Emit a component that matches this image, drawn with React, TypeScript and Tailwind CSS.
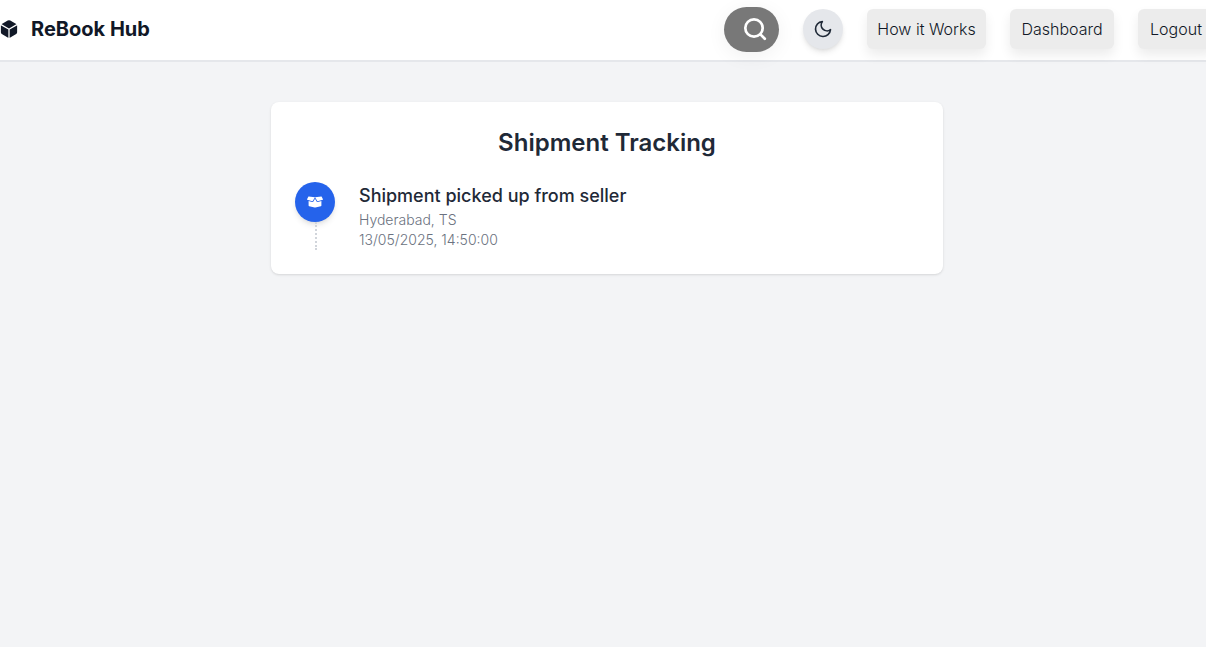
import { FaBoxOpen } from "react-icons/fa";
import { IoCube } from "react-icons/io5";
import { FiMoon } from "react-icons/fi";

const links = [
  { label: "How it Works", width: "w-[119px]" },
  { label: "Dashboard", width: "w-[104px]" },
  { label: "Logout", width: "w-[76px]" },
];

const events = [
  { title: "Shipment picked up from seller", place: "Hyderabad, TS", time: "13/05/2025, 14:50:00" },
];

function Header() {
  return (
    <header className="flex h-[62px] items-center justify-between border-b-2 border-[#e5e7eb] bg-white pb-[2px]">
      <a href="#home" className="-ml-px flex items-center gap-3 whitespace-nowrap text-[#111827]">
        <IoCube className="size-5" aria-hidden="true" />
        <span className="text-xl leading-7 font-bold">ReBook Hub</span>
      </a>
      <nav className="flex shrink-0 items-center gap-6">
        <button
          type="button"
          aria-label="Search"
          className="flex h-[45px] w-[55px] items-center justify-center rounded-full bg-[#787878] pl-[6px] text-white shadow-[0_4px_20px_rgba(0,0,0,0.06)]"
        >
          <svg className="size-6" viewBox="0 0 24 24" fill="none" stroke="currentColor" strokeWidth="2.7" strokeLinecap="round" aria-hidden="true">
            <circle cx="11" cy="11" r="8.7" />
            <path d="m17.4 17.4 4.4 4.4" />
          </svg>
        </button>
        <button
          type="button"
          aria-label="Toggle dark mode"
          className="flex size-10 items-center justify-center rounded-full bg-[#e5e7eb] text-[#1f2937] shadow-md"
        >
          <FiMoon className="size-5" aria-hidden="true" />
        </button>
        {links.map((link) => (
          <a
            key={link.label}
            href="#"
            className={`flex h-10 items-center justify-center rounded-md bg-[#ececec] text-base font-light whitespace-nowrap text-[#111827] shadow-[0_6px_12px_rgba(0,0,0,0.08)] ${link.width}`}
          >
            {link.label}
          </a>
        ))}
      </nav>
    </header>
  );
}

export default function App() {
  return (
    <div className="min-h-screen overflow-hidden bg-[#f3f4f6] font-['Inter',sans-serif]">
      <div className="-mr-2">
        <Header />
        <main className="px-4 py-10">
          <section className="mx-auto max-w-2xl rounded-lg bg-white p-6 text-[#1f2937] shadow-sm">
            <h1 className="mb-[23px] pt-px text-center text-2xl leading-8 font-semibold">Shipment Tracking</h1>
            <ol>
              {events.map((event) => (
                <li key={event.title} className="flex gap-6">
                  <div className="flex flex-col items-center">
                    <span className="flex size-10 items-center justify-center rounded-full bg-[#2563eb] text-white shadow-md">
                      <FaBoxOpen className="size-4" aria-hidden="true" />
                    </span>
                    <span className="ml-[2px] h-7 border-l-2 border-dotted border-[#d1d5db]" />
                  </div>
                  <div>
                    <h2 className="text-lg leading-7 font-medium">{event.title}</h2>
                    <p className="text-sm leading-5 font-light text-[#6b7280]">{event.place}</p>
                    <p className="text-sm leading-5 font-light text-[#6b7280]">{event.time}</p>
                  </div>
                </li>
              ))}
            </ol>
          </section>
        </main>
      </div>
    </div>
  );
}
